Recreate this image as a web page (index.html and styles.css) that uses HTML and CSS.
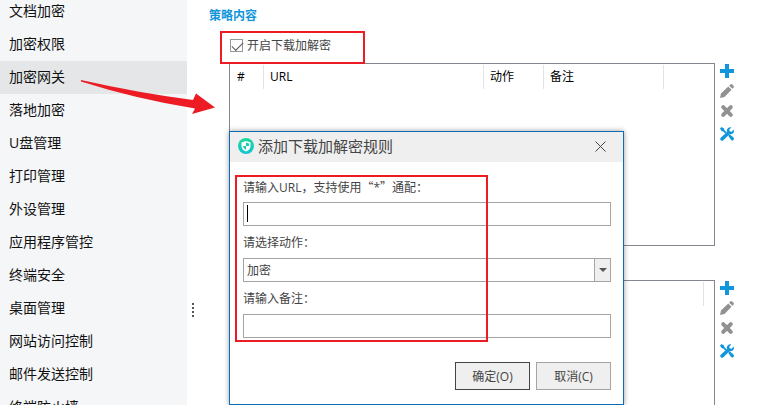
FILE: index.html
```html
<!DOCTYPE html>
<html lang="zh-CN">
  <head>
    <meta charset="utf-8">
    <title>加密网关</title>
    <link rel="stylesheet" href="styles.css">
  </head>
  <body>

    <!-- shared icons -->
    <svg class="sprite" aria-hidden="true">
      <symbol id="i-add" viewBox="0 0 14 14">
        <path d="M5 0h4v5h5v4H9v5H5V9H0V5h5z"/>
      </symbol>
      <symbol id="i-edit" viewBox="0 0 14 14">
        <path d="M0 14l1-4.500L8.300 2.500l3.200 3.200L4.500 13z"/>
        <path d="M9.200 1.700l1-1.100q1-1 2.100 0l1.100 1.100q1 1 0 2.100l-1 1z"/>
      </symbol>
      <symbol id="i-del" viewBox="0 0 14 14">
        <path d="M3.200 3.200l7.600 7.600M10.800 3.200l-7.600 7.600" fill="none" stroke="currentColor" stroke-width="4" stroke-linecap="round"/>
      </symbol>
      <symbol id="i-set" viewBox="0 0 14 14">
        <path d="M0 1.500L1.500 0 4 1.500l.5 1.700 2.300 2.300-1.300 1.300-2.300-2.300L1.500 4z"/>
        <path d="M8.200 8.700l1.500-1.500 3.800 3.300q1 1.300 0 2.400-1.200 1.200-2.400.2z"/>
        <path d="M13.700 2.600q.8 2.500-1 4-1.500 1.100-3.200.6L3.400 13.300q-1.200 1-2.500 0-1.300-1.300-.2-2.600L7 5q-.6-2 .7-3.500Q9.200-.2 11.400.4L9.300 2.500l.4 1.800 1.900.4z"/>
      </symbol>
    </svg>

    <div class="page">

      <nav class="sidebar">
        <a href="#">文档加密</a>
        <a href="#">加密权限</a>
        <a href="#" class="active">加密网关</a>
        <a href="#">落地加密</a>
        <a href="#">U盘管理</a>
        <a href="#">打印管理</a>
        <a href="#">外设管理</a>
        <a href="#">应用程序管控</a>
        <a href="#">终端安全</a>
        <a href="#">桌面管理</a>
        <a href="#">网站访问控制</a>
        <a href="#">邮件发送控制</a>
        <a href="#">终端防火墙</a>
      </nav>

      <div class="splitter"><i></i><i></i><i></i><i></i></div>

      <main class="content">
        <h2>策略内容</h2>

        <label class="enable">
          <input type="checkbox" checked>
          <span>开启下载加解密</span>
        </label>

        <div class="row">
          <div class="list">
            <table>
              <thead>
                <tr>
                  <th class="c-num">#</th>
                  <th class="c-url">URL</th>
                  <th class="c-act">动作</th>
                  <th class="c-note">备注</th>
                </tr>
              </thead>
            </table>
          </div>
          <div class="tools">
            <button type="button" aria-label="添加"><svg><use href="#i-add"/></svg></button>
            <button type="button" class="off" aria-label="编辑"><svg><use href="#i-edit"/></svg></button>
            <button type="button" class="off" aria-label="删除"><svg><use href="#i-del"/></svg></button>
            <button type="button" class="set" aria-label="设置"><svg><use href="#i-set"/></svg></button>
          </div>
        </div>

        <div class="row second">
          <div class="list">
            <div class="blank-head"></div>
          </div>
          <div class="tools">
            <button type="button" aria-label="添加"><svg><use href="#i-add"/></svg></button>
            <button type="button" class="off" aria-label="编辑"><svg><use href="#i-edit"/></svg></button>
            <button type="button" class="off" aria-label="删除"><svg><use href="#i-del"/></svg></button>
            <button type="button" class="set" aria-label="设置"><svg><use href="#i-set"/></svg></button>
          </div>
        </div>
      </main>

      <form class="dialog" role="dialog" aria-labelledby="dlg-title">
        <header>
          <svg class="logo" viewBox="0 0 16 16">
            <defs>
              <linearGradient id="lg" x1="0" y1="0" x2="0" y2="1">
                <stop offset="0" stop-color="#1ed99a"/>
                <stop offset="1" stop-color="#12c4d2"/>
              </linearGradient>
            </defs>
            <circle cx="8" cy="8" r="8" fill="url(#lg)"/>
            <path d="M8 3l4.500 1.500V8Q12.500 11.500 8 13.500 3.500 11.500 3.500 8V4.500z" fill="#fff"/>
            <path d="M8 4.500l3 1V8H8zM8 8v4Q5 10.500 5 8z" fill="#18cfb4"/>
          </svg>
          <h1 id="dlg-title">添加下载加解密规则</h1>
          <button type="button" class="close" aria-label="关闭">
            <svg viewBox="0 0 11 11"><path d="M0.500 0.500l10 10M10.500 0.500l-10 10"/></svg>
          </button>
        </header>

        <div class="fields">
          <label for="url">请输入URL，支持使用<span class="cjk">“</span>*<span class="cjk">”</span>通配：</label>
          <div class="field">
            <input type="text" id="url">
            <i class="caret"></i>
          </div>

          <label for="act">请选择动作：</label>
          <div class="field">
            <select id="act">
              <option>加密</option>
              <option>解密</option>
            </select>
            <i class="drop"></i>
          </div>

          <label for="note">请输入备注：</label>
          <div class="field">
            <input type="text" id="note">
          </div>
        </div>

        <footer>
          <button type="submit" class="primary">确定(O)</button>
          <button type="button">取消(C)</button>
        </footer>
      </form>

      <!-- red guide marks -->
      <div class="mark mark-enable"></div>
      <div class="mark mark-fields"></div>
      <svg class="arrow" viewBox="0 0 134 36">
        <path d="M0 0Q58 13 112 20L115 13.500 134 27.500 111 34 114 28.500Q55 19 0 1.500z"/>
      </svg>

    </div>

  </body>
</html>
```

FILE: styles.css
```css
* {
  box-sizing: border-box;
}

body {
  margin: 0;
  background: #fff;
  color: #444;
  font-family: "Open Sans", "Noto Sans CJK SC", sans-serif;
  font-size: 12px;
}

h1, h2 {
  margin: 0;
  font-weight: normal;
}

button, input, select {
  font: inherit;
  color: inherit;
}

.sprite {
  display: none;
}

.cjk {
  font-family: "Noto Sans CJK SC", sans-serif;
}

.page {
  position: relative;
  display: flex;
  height: 100vh;
  overflow: hidden;
}

/* left menu */
.sidebar {
  flex: none;
  width: 187px;
  margin-top: -5px;
  background: #f4f6f8;
}

.sidebar a {
  display: block;
  height: 33px;
  padding-left: 9px;
  line-height: 31px;
  font-size: 14px;
  color: #111;
  text-decoration: none;
}

.sidebar a.active {
  background: #e4e6e7;
}

.splitter {
  display: flex;
  flex: none;
  flex-direction: column;
  gap: 2px;
  width: 22px;
  padding: 303px 0 0 5px;
}

.splitter i {
  width: 2px;
  height: 2px;
  background: #555;
}

/* policy content */
.content {
  display: flex;
  flex: 1;
  flex-direction: column;
}

h2 {
  padding-top: 6px;
  line-height: 20px;
  font-size: 12px;
  font-weight: bold;
  color: #1296db;
}

.enable {
  display: flex;
  align-items: center;
  gap: 4px;
  height: 18px;
  margin: 10px 0 9px 21px;
}

.enable input {
  width: 13px;
  height: 13px;
  margin: 0;
  appearance: none;
  border: 1px solid #999;
  background: #fff;
}

.enable input:checked::before {
  content: "";
  display: block;
  width: 10px;
  height: 5px;
  margin: 2px 1px;
  border: solid #555;
  border-width: 0 0 1px 1px;
  transform: rotate(-45deg);
}

.row {
  display: flex;
  height: 183px;
  margin-left: 20px;
}

.row.second {
  flex: 1;
  margin-top: 34px;
}

.list {
  flex: 1;
  padding-top: 1px;
  border: 1px solid #828790;
}

.second .list {
  border-bottom: 0;
}

.list table {
  border-spacing: 0;
  table-layout: fixed;
  width: 434px;
}

.list th {
  height: 24px;
  padding: 0 0 2px 6px;
  border-right: 1px solid #e3e3e3;
  font-weight: normal;
  text-align: left;
  color: #000;
}

.list .c-num {
  width: 34px;
  padding-left: 7px;
}

.c-url {
  width: 220px;
}

.c-act {
  width: 60px;
}

.blank-head {
  height: 24px;
  margin-right: 10px;
  border-right: 1px solid #e3e3e3;
}

.tools {
  display: flex;
  flex: none;
  flex-direction: column;
  gap: 6px;
  width: 47px;
  padding: 1px 0 0 5px;
}

.tools button {
  width: 14px;
  height: 14px;
  padding: 0;
  border: 0;
  background: none;
  color: #1296db;
}

.tools .off {
  color: #919191;
}

.tools .set {
  margin-top: 3px;
}

.tools svg {
  display: block;
  width: 14px;
  height: 14px;
  fill: currentColor;
}

/* add rule dialog */
.dialog {
  position: absolute;
  top: 131px;
  left: 229px;
  width: 395px;
  border: 1px solid #0c6cb4;
  background: #fff;
  box-shadow: 0 0 5px rgba(0, 0, 0, .4);
}

.dialog header {
  display: flex;
  align-items: center;
  height: 30px;
  padding: 0 17px 2px 8px;
  background: #efefef;
}

.logo {
  width: 16px;
  height: 16px;
  margin-right: 4px;
}

h1 {
  flex: 1;
  font-size: 15px;
  line-height: 28px;
}

.close {
  padding: 0;
  border: 0;
  background: none;
}

.close svg {
  display: block;
  width: 11px;
  height: 11px;
  fill: none;
  stroke: #444;
}

.fields {
  padding: 15px 12px 0 13px;
}

.fields label {
  display: block;
  height: 20px;
  line-height: 20px;
}

.field {
  position: relative;
  margin: 5px 0 7px;
}

.field input,
.field select {
  display: block;
  width: 100%;
  height: 24px;
  padding: 0 3px;
  appearance: none;
  border: 1px solid #a5a5a5;
  border-radius: 0;
  background: #fff;
  outline: 0;
}

.caret {
  position: absolute;
  top: 3px;
  left: 4px;
  width: 1px;
  height: 17px;
  background: #000;
}

.drop {
  position: absolute;
  top: 1px;
  right: 1px;
  width: 16px;
  height: 22px;
  border-left: 1px solid #a5a5a5;
  background: #efefef;
  pointer-events: none;
}

.drop::before {
  content: "";
  display: block;
  width: 0;
  margin: 9px 4px;
  border: solid transparent;
  border-width: 4px 4px 0;
  border-top-color: #555;
}

.dialog footer {
  display: flex;
  justify-content: flex-end;
  gap: 6px;
  padding: 17px 12px 14px;
}

.dialog footer button {
  width: 75px;
  height: 28px;
  padding: 0;
  border: 1px solid #a5a5a5;
  background: #efefef;
}

.dialog footer .primary {
  border-color: #444;
}

/* guide marks */
.mark {
  position: absolute;
  border: 2px solid #ed1c24;
  pointer-events: none;
}

.mark-enable {
  top: 31px;
  left: 220px;
  width: 145px;
  height: 33px;
}

.mark-fields {
  top: 175px;
  left: 235px;
  width: 253px;
  height: 167px;
}

.arrow {
  position: absolute;
  top: 80px;
  left: 81px;
  width: 134px;
  height: 36px;
  fill: #ed1c24;
  pointer-events: none;
}
```
